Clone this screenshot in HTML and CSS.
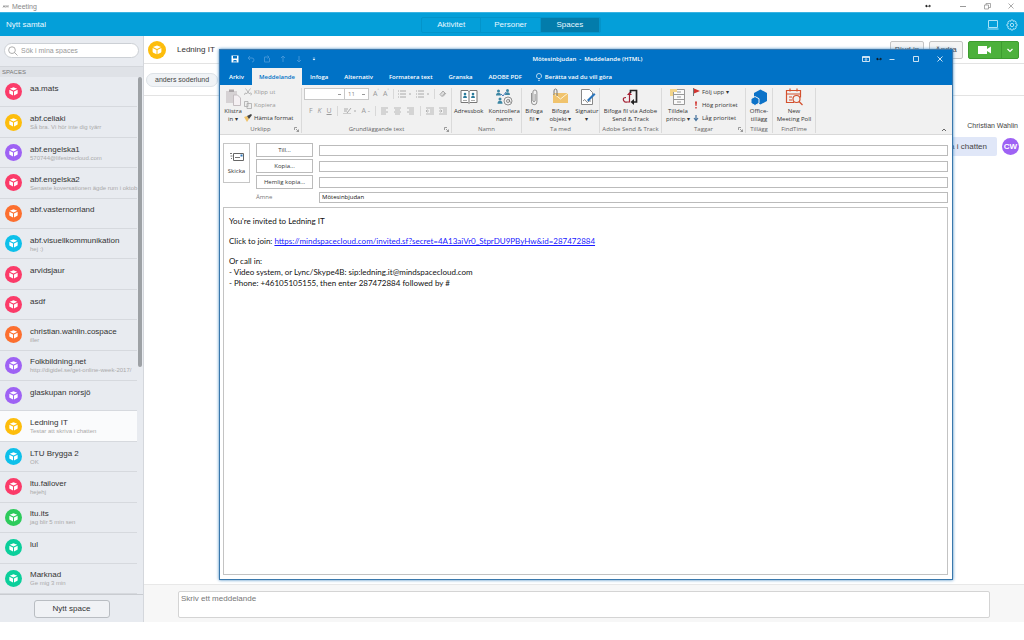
FILE: index.html
```html
<!DOCTYPE html>
<html lang="sv">
<head>
<meta charset="utf-8">
<title>Meeting</title>
<link rel="stylesheet" href="styles.css">
</head>
<body>
<svg class="defs" aria-hidden="true">
  <symbol id="cube" viewBox="0 0 18 18">
    <g fill="#fff"><path d="M9 4.600l4 1.500-4 1.900-4-1.900z"/><path d="M4.600 7.100l3.900 1.900v4.200l-3.100-1.500q-.8-.4-.8-1.200z"/><path d="M13.400 7.100L9.500 9v4.200l3.100-1.500q.8-.4.8-1.200z"/></g>
  </symbol>
  <symbol id="resize" viewBox="0 0 5 5"><path d="M.5 3V.5H3M2 2l2.500 2.500M4.500 2.500v2h-2" fill="none" stroke="#777" stroke-width=".7"/></symbol>
  <symbol id="arrows" viewBox="0 0 8 5"><path d="M0 2.500L2.500.5v4zM8 2.500L5.500.5v4zM2 2h4v1H2z" fill="#111"/></symbol>
</svg>
<header class="os-bar">
  <svg class="i8" viewBox="0 0 8 8"><path d="M1 5.500l1-2 1 2M4 5.500v-2l1 1 1-1v2" fill="none" stroke="#777" stroke-width=".7"/></svg>
  <span>Meeting</span>
  <div class="os-controls">
    <svg class="i6" viewBox="0 0 8 5"><use href="#arrows"/></svg>
    <button aria-label="Minimera"><svg class="i8" viewBox="0 0 8 8"><path d="M1 4.500h6" stroke="#999"/></svg></button>
    <button aria-label="Återställ"><svg class="i8" viewBox="0 0 8 8"><path d="M1.500 3h4v4h-4zM3 3V1.500h4.500v4H5.500" fill="none" stroke="#888" stroke-width=".7"/></svg></button>
    <button aria-label="Stäng"><svg class="i8" viewBox="0 0 8 8"><path d="M1.500 1.500l5 5m0-5l-5 5" stroke="#888" stroke-width=".7"/></svg></button>
  </div>
</header>
<nav class="app-bar">
  <button class="new-call">Nytt samtal</button>
  <div class="tabs"><button>Aktivitet</button><button>Personer</button><button class="on">Spaces</button></div>
  <div class="app-tools">
    <button aria-label="Skärm"><svg class="i12" viewBox="0 0 12 12"><path d="M1.500 1.500h9v7h-9zM.5 10h11" fill="none" stroke="#a9e2f8"/></svg></button>
    <button aria-label="Inställningar"><svg class="i12" viewBox="0 0 12 12"><g fill="none" stroke="#a9e2f8"><circle cx="6" cy="6" r="1.700"/><path d="M5 1h2l.4 1.400 1.500-.6 1.300 1.300-.6 1.500 1.400.4v2l-1.400.4.6 1.500-1.300 1.300-1.500-.6L7 11H5l-.4-1.400-1.500.6-1.300-1.300.6-1.500L1 7V5l1.400-.4-.6-1.500 1.300-1.300 1.500.6z"/></g></svg></button>
  </div>
</nav>
<div class="app">
  <aside class="sidebar">
    <div class="search"><svg class="i10" viewBox="0 0 10 10"><path d="M6.500 6.500l3 3M4 7.500a3.300 3.300 0 1 1 0-6.700 3.300 3.300 0 0 1 0 6.700z" fill="none" stroke="#999" stroke-width=".8"/></svg><input type="text" aria-label="Sök" placeholder="Sök i mina spaces"></div>
    <h2>SPACES</h2>
    <div class="list-wrap">
    <ul class="spaces">
      <li><svg class="av pink"><use href="#cube"/></svg><div><b>aa.mats</b><small></small></div></li>
      <li><svg class="av yellow"><use href="#cube"/></svg><div><b>abf.celiaki</b><small>Så bra. Vi hör inte dig tyärr</small></div></li>
      <li><svg class="av purple"><use href="#cube"/></svg><div><b>abf.engelska1</b><small>570744@lifesizecloud.com</small></div></li>
      <li><svg class="av pink"><use href="#cube"/></svg><div><b>abf.engelska2</b><small>Senaste koversationen ägde rum i oktob</small></div></li>
      <li><svg class="av orange"><use href="#cube"/></svg><div><b>abf.vasternorrland</b><small></small></div></li>
      <li><svg class="av cyan"><use href="#cube"/></svg><div><b>abf.visuellkommunikation</b><small>hej :)</small></div></li>
      <li><svg class="av pink"><use href="#cube"/></svg><div><b>arvidsjaur</b><small></small></div></li>
      <li><svg class="av pink"><use href="#cube"/></svg><div><b>asdf</b><small></small></div></li>
      <li><svg class="av orange"><use href="#cube"/></svg><div><b>christian.wahlin.cospace</b><small>iller</small></div></li>
      <li><svg class="av purple"><use href="#cube"/></svg><div><b>Folkbildning.net</b><small>http://digidel.se/get-online-week-2017/</small></div></li>
      <li><svg class="av purple"><use href="#cube"/></svg><div><b>glaskupan norsjö</b><small></small></div></li>
      <li class="sel"><svg class="av yellow"><use href="#cube"/></svg><div><b>Ledning IT</b><small>Testar att skriva i chatten</small></div></li>
      <li><svg class="av cyan"><use href="#cube"/></svg><div><b>LTU Brygga 2</b><small>OK</small></div></li>
      <li><svg class="av pink"><use href="#cube"/></svg><div><b>ltu.failover</b><small>hejehj</small></div></li>
      <li><svg class="av green"><use href="#cube"/></svg><div><b>ltu.its</b><small>jag blir 5 min sen</small></div></li>
      <li><svg class="av teal"><use href="#cube"/></svg><div><b>lul</b><small></small></div></li>
      <li><svg class="av teal"><use href="#cube"/></svg><div><b>Marknad</b><small>Ge mig 3 min</small></div></li>
    </ul>
    <div class="thumb"></div>
    </div>
    <div class="side-foot"><button>Nytt space</button></div>
  </aside>
  <main class="chat">
    <header class="chat-head">
      <svg class="av yellow"><use href="#cube"/></svg><h1>Ledning IT</h1>
      <div class="chat-actions">
        <button class="plain">Bjud in</button><button class="plain">Ändra</button>
        <div class="call"><button aria-label="Ring"><svg class="i16" viewBox="0 0 16 10"><path d="M1 1h9v3l4-2.500v7L10 6v3H1z" fill="#fff"/></svg></button><button aria-label="Fler val"><svg class="i8" viewBox="0 0 8 8"><path d="M1.500 3L4 5.500 6.500 3" fill="none" stroke="#fff" stroke-width="1.200"/></svg></button></div>
      </div>
    </header>
    <div class="people"><span>anders soderlund</span></div>
    <section class="msgs">
      <p class="who">Christian Wahlin</p>
      <div class="msg"><p>Testar att skriva i chatten</p><span class="cw">CW</span></div>
    </section>
    <footer class="compose"><textarea aria-label="Meddelande" placeholder="Skriv ett meddelande"></textarea></footer>
  </main>
</div>

<section class="mail">
  <header class="mail-title">
    <div class="quick">
      <svg class="i8" viewBox="0 0 8 8"><path d="M.5.5h7v7h-7z" fill="#fff"/><path d="M2 1h4v2.500H2zM2.500 5h3v2.500h-1V6h-1v1.500h-1z" fill="#0072c6"/></svg>
      <svg class="i8 dim" viewBox="0 0 8 8"><path d="M3 1L1 3l2 2M1 3h4q2 0 2 2t-2 2"/></svg>
      <svg class="i8 dim" viewBox="0 0 8 8"><path d="M6.500 3v4h-5V2h4M4.500.5L6 2 4.500 3.500"/></svg>
      <svg class="i8 dim" viewBox="0 0 8 8"><path d="M4 7V1M2 3l2-2 2 2"/></svg>
      <svg class="i8 dim" viewBox="0 0 8 8"><path d="M4 1v6M2 5l2 2 2-2"/></svg>
      <svg class="i6" viewBox="0 0 8 8"><path d="M2.500 2.500h3M2.500 4h3L4 5.500z" fill="#fff" stroke="#fff" stroke-width=".5"/></svg>
    </div>
    <h2>Mötesinbjudan &nbsp;-&nbsp; Meddelande (HTML)</h2>
    <div class="win">
      <svg class="i8" viewBox="0 0 8 8"><path d="M.5 1.500h7v5h-7zM.5 2.500h7M4 6V4M3 4.500l1-1 1 1" fill="none" stroke="#fff" stroke-width=".8"/></svg>
      <svg class="i6" viewBox="0 0 8 5"><use href="#arrows"/></svg>
      <button aria-label="Minimera fönster"><svg class="i8" viewBox="0 0 8 8"><path d="M1.500 4.500h5" stroke="#fff" stroke-width=".8"/></svg></button>
      <button aria-label="Maximera fönster"><svg class="i8" viewBox="0 0 8 8"><path d="M1.500 1.500h5v5h-5z" fill="none" stroke="#fff" stroke-width=".8"/></svg></button>
      <button aria-label="Stäng fönster"><svg class="i8" viewBox="0 0 8 8"><path d="M1.500 1.500l5 5m0-5l-5 5" stroke="#fff" stroke-width=".8"/></svg></button>
    </div>
  </header>
  <nav class="mail-tabs">
    <button>Arkiv</button><button class="on">Meddelande</button><button>Infoga</button><button>Alternativ</button><button>Formatera text</button><button>Granska</button><button>ADOBE PDF</button>
    <button class="tell"><svg class="i8" viewBox="0 0 8 8"><path d="M3 5.500Q1.500 4.500 1.500 3a2.500 2.500 0 0 1 5 0Q6.500 4.500 5 5.500zM3 7.300h2" fill="none" stroke="#fff" stroke-width=".7"/></svg>Berätta vad du vill göra</button>
  </nav>
  <div class="ribbon">
    <div class="group g-clip">
      <div class="tools">
        <button class="big"><svg class="i18" viewBox="0 0 18 18"><path d="M2 3h11v12H2z" fill="#d6d2d4"/><path d="M5 1.500h5V4H5z" fill="#aaa5a8"/><path d="M9.500 7h4l3 3v7.500h-7z" fill="#f5f0f3" stroke="#c4bdc1"/></svg>Klistra<br>in ▾</button>
        <div class="stack">
          <button class="off"><svg class="i8" viewBox="0 0 8 8"><path d="M1.500.5l4 5.500M6.500.5L2.500 6M1 7a1 1 0 1 1 1.500-1M6.500 7A1 1 0 1 0 5.500 6" fill="none" stroke="#aaa" stroke-width=".8"/></svg>Klipp ut</button>
          <button class="off"><svg class="i8" viewBox="0 0 8 8"><path d="M.5.5h3.500v5H.5zM3 2.500h4.500v5H3z" fill="#eee" stroke="#aaa" stroke-width=".8"/></svg>Kopiera</button>
          <button><svg class="i8" viewBox="0 0 8 8"><path d="M0 3l3-1 2 3-2 3z" fill="#f0c36a"/><path d="M3 2l4-2 1 1-3 4z" fill="#444"/></svg>Hämta format</button>
        </div>
      </div>
      <div class="label">Urklipp<svg class="i5"><use href="#resize"/></svg></div>
    </div>
    <div class="group g-text">
      <div class="tools col">
        <div class="line"><div class="combo"><select class="font" aria-label="Teckensnitt"><option></option></select><select class="size" aria-label="Storlek"><option>11</option></select></div>
          <span class="glyph">A<sup>˄</sup></span><span class="glyph">A<sup>˅</sup></span><i></i>
          <svg class="i14" viewBox="0 0 14 8"><path d="M0 1h1m1 0h6M0 4h1m1 0h6M0 7h1m1 0h6M11 4h2" stroke="#aaa"/></svg>
          <svg class="i14" viewBox="0 0 14 8"><path d="M0 1h1m1 0h6M0 4h1m1 0h6M0 7h1m1 0h6M11 4h2" stroke="#aaa"/></svg><i></i>
          <svg class="i8" viewBox="0 0 8 8"><path d="M1 4.500L4 1l2 2-3 3.500zM4 6.500L7 3" fill="#ddd" stroke="#aaa"/></svg>
        </div>
        <div class="line low"><span class="glyph">F</span><span class="glyph"><em>K</em></span><span class="glyph"><u>U</u></span><i></i>
          <svg class="i14" viewBox="0 0 14 8"><path d="M1 2h4M1 4h3M4 6l4-5M11 4h2" stroke="#aaa"/><path d="M0 6.500h8" stroke="#ccc"/></svg>
          <span class="glyph">A&nbsp;-</span><i></i>
          <svg class="i8" viewBox="0 0 8 8"><path d="M0 1h7M0 3h5M0 5h7M0 7h5" stroke="#aaa" stroke-width=".8"/></svg>
          <svg class="i8" viewBox="0 0 8 8"><path d="M0 1h7M1 3h5M0 5h7M1 7h5" stroke="#aaa" stroke-width=".8"/></svg>
          <svg class="i8" viewBox="0 0 8 8"><path d="M0 1h7M2 3h5M0 5h7M2 7h5" stroke="#aaa" stroke-width=".8"/></svg><i></i>
          <svg class="i8" viewBox="0 0 8 8"><path d="M0 1h8M4 3h4M4 5h4M0 7h8M3 4H0l1.500-1.500M0 4l1.500 1.500" fill="none" stroke="#aaa" stroke-width=".8"/></svg>
          <svg class="i8" viewBox="0 0 8 8"><path d="M0 1h8M4 3h4M4 5h4M0 7h8M0 4h3L1.500 2.500M3 4L1.500 5.500" fill="none" stroke="#aaa" stroke-width=".8"/></svg>
        </div>
      </div>
      <div class="label">Grundläggande text<svg class="i5"><use href="#resize"/></svg></div>
    </div>
    <div class="group g-name">
      <div class="tools">
        <button class="big"><svg class="i18" viewBox="0 0 18 18"><path d="M1 2.500h7l1 1 1-1h7v12h-7l-1 1-1-1H1z" fill="#fff" stroke="#777"/><path d="M9 3v12" stroke="#777"/><g fill="#2b7b9b"><circle cx="5" cy="6" r="1.300"/><path d="M3 10q0-2.500 2-2.500T7 10z"/><circle cx="13" cy="6" r="1.300"/><path d="M11 10q0-2.500 2-2.500t2 2.500z"/></g><path d="M3 12.500h4m4 0h4" stroke="#aaa"/></svg>Adressbok</button>
        <button class="big"><svg class="i18" viewBox="0 0 18 18"><g fill="#3b86a3"><circle cx="3.500" cy="3" r="1.500"/><circle cx="12.500" cy="2.500" r="1.500"/><circle cx="5" cy="11" r="1.500"/><path d="M1 7.500q0-2.700 2.500-2.700T6 7.500zM10 7q0-2.700 2.500-2.700T15 7zM2.500 15.700q0-3 2.500-3t2.500 3z"/></g><path d="M6 6l2 2 3-4" fill="none" stroke="#4a7ebb"/><circle cx="13" cy="13" r="4" fill="#f1f1f1" stroke="#777" stroke-width=".8"/><circle cx="13" cy="13" r="1.500" fill="none" stroke="#777" stroke-width=".8"/><path d="M14.500 11.500v2q.5 1 1.500.5" fill="none" stroke="#777" stroke-width=".8"/></svg>Kontrollera<br>namn</button>
      </div>
      <div class="label">Namn</div>
    </div>
    <div class="group g-with">
      <div class="tools">
        <button class="big"><svg class="i18" viewBox="0 0 18 18"><path d="M6.500 5v9a2.700 2.700 0 0 0 5.400 0V4a2 2 0 0 0-4 0v9q1.200 1.500 2.200 0V6" fill="none" stroke="#888" stroke-width=".9"/></svg>Bifoga<br>fil ▾</button>
        <button class="big"><svg class="i18" viewBox="0 0 18 18"><path d="M2 5h15v10H2z" fill="#f0c36d"/><path d="M2 5l7.500 6L17 5" fill="none" stroke="#fff4d8"/><path d="M3 7V3q0-2 1.500-2T6 3v5" fill="none" stroke="#777"/></svg>Bifoga<br>objekt ▾</button>
        <button class="big"><svg class="i18" viewBox="0 0 18 18"><path d="M3.500 1.500h8l3 3v12h-11z" fill="#fff" stroke="#888"/><path d="M5 13q2-3 3 0t3 0h2" fill="none" stroke="#555" stroke-width=".7"/><path d="M9 12l7-7 1.500 1.500-7 7z" fill="#2b75bb"/></svg>Signatur<br>▾</button>
      </div>
      <div class="label">Ta med</div>
    </div>
    <div class="group g-adobe">
      <div class="tools">
        <button class="big"><svg class="i18" viewBox="0 0 18 18"><path d="M9.500 5V2.500h6V14H13" fill="none" stroke="#222" stroke-width="1.700"/><path d="M13 11v6l-3.500-3z" fill="#222"/><path d="M5 9.500q-3.500 0-2.500 2.700t3.500 1.800h2.500V6" fill="none" stroke="#a32032" stroke-width="1.200"/><path d="M6 7h5L8.500 4z" fill="#a32032"/></svg>Bifoga fil via Adobe<br>Send &amp; Track</button>
      </div>
      <div class="label">Adobe Send &amp; Track</div>
    </div>
    <div class="group g-tags">
      <div class="tools">
        <button class="big"><svg class="i18" viewBox="0 0 18 18"><path d="M4.500 1.500h11v15h-11zM4.500 6.500h11M4.500 11.500h11M8 4h4M8 9h4M8 14h4" fill="#fafafa" stroke="#999"/><path d="M1 1h7v3H4v4H1z" fill="#f2d48a"/></svg>Tilldela<br>princip ▾</button>
        <div class="stack">
          <button><svg class="i8" viewBox="0 0 8 8"><path d="M1.500 0v8" stroke="#777"/><path d="M2 .5l6 2.500-6 2.500z" fill="#d1342f"/></svg>Följ upp ▾</button>
          <button><svg class="i8" viewBox="0 0 8 8"><path d="M3 .5h2L4.500 5h-1zM3.300 6h1.400v1.500H3.300z" fill="#d1342f"/></svg>Hög prioritet</button>
          <button><svg class="i8" viewBox="0 0 8 8"><path d="M4 1v5M2 4l2 2.500L6 4" fill="none" stroke="#44719c" stroke-width="1.200"/></svg>Låg prioritet</button>
        </div>
      </div>
      <div class="label">Taggar<svg class="i5"><use href="#resize"/></svg></div>
    </div>
    <div class="group g-add">
      <div class="tools"><button class="big"><svg class="i18" viewBox="0 0 18 18"><path d="M10.500 1.500L17 5v8l-6.500 3.500L4 13V5z" fill="#0c72c8"/><path d="M5 8.500l4 2.200v4.500L5 17.500l-4-2.300v-4.500z" fill="#0c72c8" stroke="#f1f1f1"/></svg>Office-<br>tillägg</button></div>
      <div class="label">Tillägg</div>
    </div>
    <div class="group g-find">
      <div class="tools"><button class="big"><svg class="i18" viewBox="0 0 18 18"><g fill="none" stroke="#d3502e" stroke-width="1.200"><path d="M9 14.500H1.500v-12h14v7M1.500 6h14M5 .5v3M12 .5v3M4 9h3M4 12h3"/><circle cx="11.500" cy="11" r="3.500"/><path d="M14 13.500l3.500 3.500"/></g></svg>New<br>Meeting Poll</button></div>
      <div class="label">FindTime</div>
    </div>
    <button class="fold" aria-label="Dölj menyfliksområdet"><svg class="i6" viewBox="0 0 6 6"><path d="M1 4l2-2 2 2" fill="none" stroke="#666"/></svg></button>
  </div>
  <div class="fields">
    <button class="send"><svg class="i16" viewBox="0 0 16 10"><path d="M4.500 1.500h10v7h-10z" fill="#fff" stroke="#666"/><path d="M1 1.500h2M1.500 4h2M2 6.500h1M6 5.500h5" stroke="#777"/><path d="M11.500 2.500h2v2h-2z" fill="#2b75bb"/></svg>Skicka</button>
    <div class="rows">
      <button>Till...</button><input type="text" aria-label="Till">
      <button>Kopia...</button><input type="text" aria-label="Kopia">
      <button>Hemlig kopia...</button><input type="text" aria-label="Hemlig kopia">
      <label for="subject">Ämne</label><input type="text" id="subject" value="Mötesinbjudan">
    </div>
  </div>
  <article class="letter">
    <p>You're invited to Ledning IT</p>
    <p>Click to join: <a href="#">https://mindspacecloud.com/invited.sf?secret=4A13aiVr0_StprDU9PByHw&amp;id=287472884</a></p>
    <p>Or call in:<br>- Video system, or Lync/Skype4B: sip:ledning.it@mindspacecloud.com<br>- Phone: +46105105155, then enter 287472884 followed by #</p>
  </article>
</section>
</body>
</html>
```

FILE: styles.css
```css
* { box-sizing: border-box; margin: 0; }
html, body { height: 100%; }
body { position: relative; display: flex; flex-direction: column; padding-bottom: 18px; background: #fff; font-family: "Liberation Sans", Arial, sans-serif; font-size: 8px; color: #444; overflow: hidden; }
button, input, textarea, select { font: inherit; color: inherit; border: 0; padding: 0; background: none; border-radius: 0; }
button { display: flex; align-items: center; justify-content: center; }
svg { flex: none; display: block; }
.defs { position: absolute; width: 0; height: 0; }
.i5 { width: 5px; height: 5px; }
.i6 { width: 6px; height: 6px; }
.i8 { width: 8px; height: 8px; }
.i10 { width: 10px; height: 10px; }
.i12 { width: 12px; height: 12px; }
.i14 { width: 14px; height: 8px; }
.i16 { width: 16px; height: 10px; }
.i18 { width: 18px; height: 18px; }

.os-bar { flex: none; height: 12px; display: flex; align-items: center; gap: 2px; padding: 0 9px 0 2px; font-size: 7px; color: #888; }
.os-controls { margin-left: auto; display: flex; align-items: center; gap: 16px; }
.os-controls > svg { margin-right: 12px; }

.app-bar { flex: none; height: 24px; display: grid; grid-template-columns: 1fr 180px 1fr; align-items: center; background: #049fd9; color: #e8f8ff; padding: 0 6px 0 4px; border-top: 1px solid #39b3e2; }
.new-call { justify-self: start; height: 16px; padding: 0 2px; border-radius: 2px; }
.tabs { display: flex; height: 16px; border: 1px solid #0394ca; border-radius: 2px; }
.tabs button { flex: 1; border-right: 1px solid #0394ca; }
.tabs .on { background: #037cab; }
.app-tools { justify-self: end; display: flex; gap: 7px; }

.app { flex: 1; min-height: 0; display: flex; }
.sidebar { flex: none; width: 144px; display: flex; flex-direction: column; background: #e8ebf0; border-right: 1px solid #d4d7dc; }
.search { margin: 7px 4px 8px; height: 15px; display: flex; align-items: center; gap: 3px; padding: 0 3px; background: #fff; border: 1px solid #ccd0d5; border-radius: 8px; }
.search input { flex: 1; min-width: 0; font-size: 7px; }
::placeholder { color: #999; opacity: 1; }
.sidebar h2 { height: 11px; line-height: 11px; padding-left: 2px; font-size: 6px; font-weight: normal; color: #777; background: #dfe2e7; border-top: 1px solid #d4d7dc; }
.list-wrap { flex: 1; min-height: 0; display: flex; }
.spaces { flex: 1; min-width: 0; list-style: none; padding: 0; display: flex; flex-direction: column; }
.spaces li { flex: 1; min-height: 0; display: flex; align-items: center; gap: 8px; padding-left: 5px; border-bottom: 1px solid #d6d9de; }
.spaces li.sel { background: #fafbfc; }
.spaces div { min-width: 0; display: flex; flex-direction: column; }
.spaces b { font-weight: normal; font-size: 8px; line-height: 11px; color: #333; white-space: nowrap; }
.spaces small { font-size: 6px; line-height: 7px; height: 7px; color: #aaa; white-space: nowrap; }
.thumb { width: 4px; margin: 0 1px; height: 56%; background: #9da1a5; border-radius: 2px; }
.side-foot { flex: none; height: 28px; display: flex; justify-content: center; align-items: center; border-top: 1px solid #c9ccd1; }
.side-foot button { width: 76px; height: 18px; background: #f0f2f5; border: 1px solid #b9bdc2; border-radius: 3px; color: #333; }
.av { width: 18px; height: 18px; border-radius: 50%; }
.spaces .av { width: 17px; height: 17px; }
.pink { background: #fb3b69; }
.yellow { background: #fdbd0c; }
.purple { background: #9e62f4; }
.orange { background: #fc6f2f; }
.cyan { background: #0dc0ea; }
.green { background: #2dcb5c; }
.teal { background: #0bcf9b; }

.chat { flex: 1; min-width: 0; display: flex; flex-direction: column; }
.chat-head { height: 28px; display: flex; align-items: center; gap: 11px; padding: 0 5px 0 4px; border-bottom: 1px solid #e3e3e3; }
.chat-head h1 { font-size: 8px; font-weight: normal; color: #333; }
.chat-actions { margin-left: auto; display: flex; gap: 5px; }
.plain { width: 34px; height: 18px; font-size: 8px; background: #f4f4f4; border: 1px solid #c4c4c4; border-radius: 2px; }
.call { display: flex; width: 51px; height: 18px; background: #4cb13c; border: 1px solid #3d9c30; border-radius: 2px; }
.call button:first-child { flex: 1; border-right: 1px solid #3d9c30; }
.call button:last-child { width: 16px; }
.people { height: 32px; display: flex; align-items: center; padding-left: 2px; border-bottom: 1px solid #e3e3e3; }
.people span { padding: 0 8px; font-size: 7px; line-height: 12px; background: #f0f3f6; border: 1px solid #dde2e7; border-radius: 7px; }
.msgs { flex: 1; display: flex; flex-direction: column; align-items: flex-end; gap: 7px; padding: 26px 5px 0; }
.who { font-size: 7px; line-height: 8px; padding-right: 1px; }
.msg { display: flex; align-items: center; gap: 5px; }
.msg p { line-height: 19px; padding: 0 10px; background: #e0e7f8; border-radius: 2px; }
.cw { width: 17px; height: 17px; line-height: 17px; border-radius: 50%; background: #9e62f4; color: #fff; text-align: center; font-weight: bold; font-size: 8px; }
.compose { flex: none; height: 38px; padding: 6px 34px 5px; background: #f7f7f7; border-top: 1px solid #e8e8e8; }
.compose textarea { display: block; width: 100%; height: 27px; resize: none; padding: 2px; background: #fff; border: 1px solid #d4d4d4; border-radius: 2px; }
.compose ::placeholder { color: #777; }

.mail { position: absolute; inset: 49px 71px 60px 219px; display: flex; flex-direction: column; background: #fff; border: 1px solid #3a78ac; box-shadow: 0 0 3px #3f86c0; font-family: "Open Sans", "Noto Sans", sans-serif; font-size: 6px; color: #333; }
.mail-title { flex: none; height: 18px; display: grid; grid-template-columns: 1fr auto 1fr; align-items: center; background: #0072c6; color: #fff; padding: 0 8px 0 11px; }
.mail-title h2 { font-size: 6px; font-weight: 600; }
.quick { display: flex; align-items: center; gap: 8px; }
.dim { fill: none; stroke: #3f94d8; }
.win { justify-self: end; display: flex; align-items: center; gap: 16px; }
.win > svg + svg { margin: 0 -10px; }
.mail-tabs { flex: none; height: 17px; display: flex; background: #0072c6; color: #fff; font-weight: 600; padding-left: 1px; }
.mail-tabs button { padding: 0 8px; }
.mail-tabs button:first-child { width: 31px; }
.mail-tabs .on { width: 50px; background: #f1f1f1; color: #0072c6; }
.mail-tabs .tell { gap: 2px; padding: 0 5px; }

.ribbon { flex: none; height: 50px; display: flex; background: #f1f1f1; border-bottom: 1px solid #d9d9d9; padding: 3px 0 1px; }
.group { display: flex; flex-direction: column; border-right: 1px solid #dadada; }
.g-clip { width: 82px; }
.g-text { width: 150px; }
.g-name { width: 70px; }
.g-with { width: 78px; }
.g-adobe { width: 62px; }
.g-tags { width: 84px; }
.g-add { width: 27px; }
.g-find { width: 43px; }
.tools { flex: 1; display: flex; justify-content: center; gap: 2px; }
.g-clip .tools, .g-tags .tools { justify-content: flex-start; padding-left: 4px; }
.tools.col { flex-direction: column; justify-content: flex-start; gap: 5px; }
.label { height: 8px; line-height: 8px; position: relative; text-align: center; color: #666; white-space: nowrap; }
.label svg { position: absolute; right: 2px; bottom: 1px; }
.big { flex-direction: column; justify-content: flex-start; line-height: 8px; text-align: center; white-space: nowrap; }
.big svg { margin-bottom: 1px; }
.g-name .big, .g-with .big { flex: 1; }
.stack { display: flex; flex-direction: column; gap: 5px; }
.stack button { justify-content: flex-start; gap: 2px; height: 8px; line-height: 8px; white-space: nowrap; }
.off { color: #999; }
.line { display: flex; align-items: center; justify-content: space-between; height: 12px; padding: 0 4px 0 2px; }
.line i { width: 1px; height: 10px; background: #d8d8d8; }
.low { padding-left: 7px; }
.combo { display: flex; }
.line select { appearance: none; height: 12px; padding: 0 3px; border: 1px solid #c8c8c8; color: #888; background: #fff linear-gradient(#999, #999) no-repeat right 3px center / 3px 1px; }
.font { width: 41px; }
.line .size { width: 24px; border-left: 0; }
.glyph { font-size: 7px; line-height: 10px; color: #999; white-space: nowrap; }
.glyph sup { font-size: 5px; line-height: 0; }
.fold { margin: auto 5px 0 auto; }

.fields { flex: none; display: flex; gap: 6px; padding: 8px 4px 4px 3px; }
.send { width: 27px; height: 40px; flex-direction: column; gap: 5px; border: 1px solid #c6c6c6; }
.rows { flex: 1; display: grid; grid-template-columns: 57px 1fr; gap: 2px 6px; align-items: center; }
.rows button { height: 14px; border: 1px solid #bbb; }
.rows input { height: 11px; border: 1px solid #bbb; padding-left: 2px; min-width: 0; color: #111; }
.rows label { line-height: 12px; color: #777; }
.letter { flex: 1; margin: 0 4px 4px 3px; padding: 8px 5px; border: 1px solid #c3c3c3; display: flex; flex-direction: column; gap: 9px; font-family: Lato, "Open Sans", sans-serif; font-size: 8px; line-height: 11px; color: #111; }
.letter a { color: #1a1aff; }
```
